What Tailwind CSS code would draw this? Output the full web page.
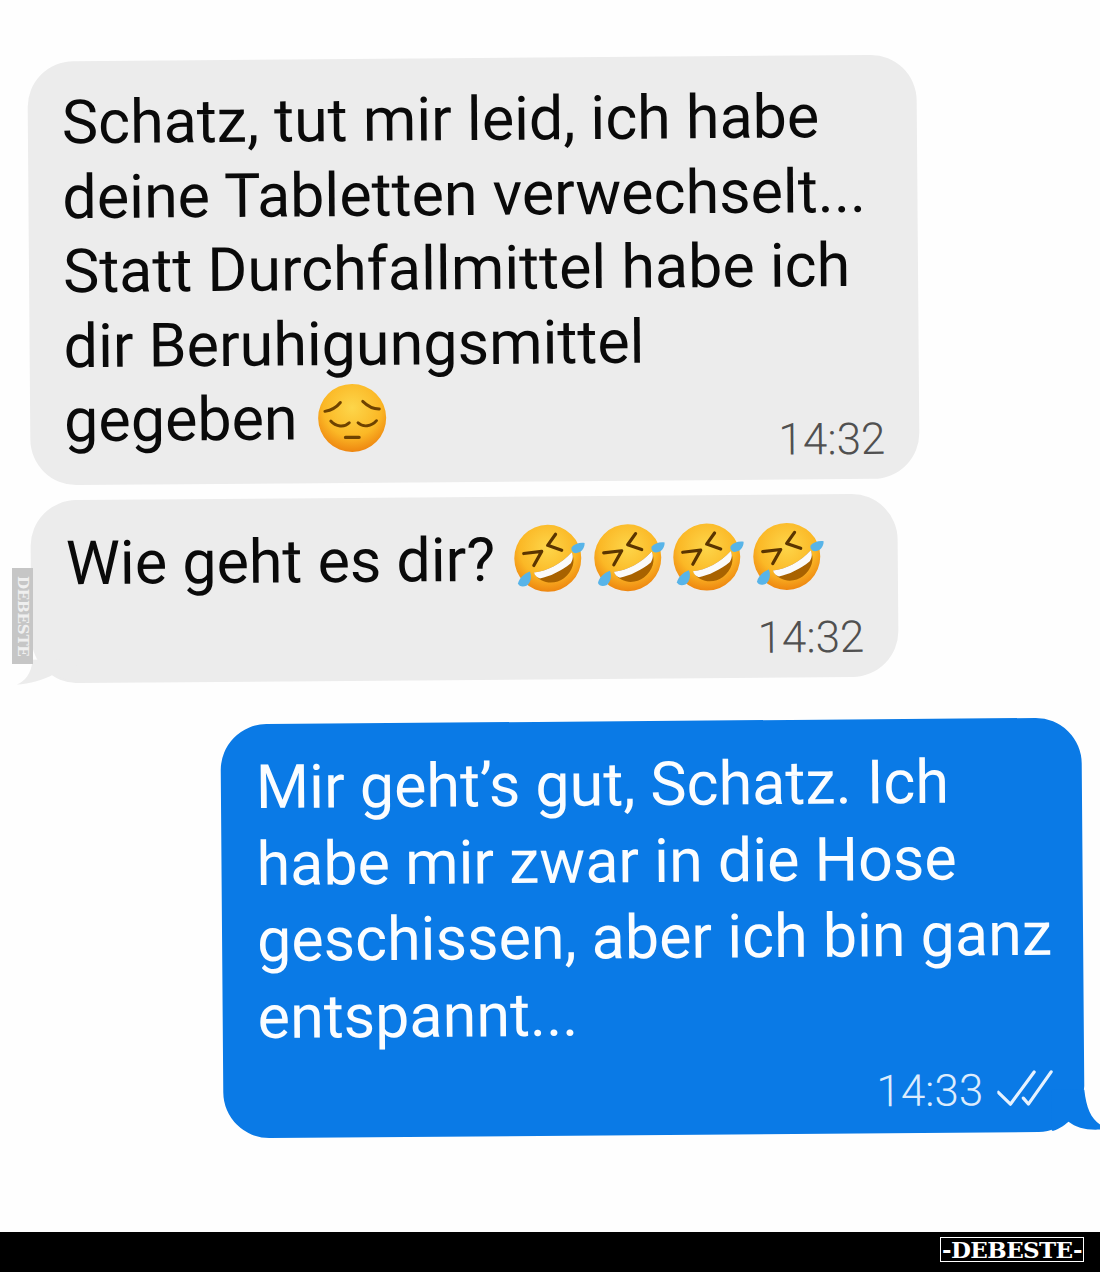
<!doctype html>
<html lang="de">
<head>
  <meta charset="UTF-8">
  <title>Chat</title>
  <script src="https://cdn.jsdelivr.net/npm/@tailwindcss/browser@4"></script>
</head>
<body class="bg-[#fefefe]">
  <svg class="absolute w-0 h-0">
    <defs>
      <radialGradient id="yellow" cx="50%" cy="35%" r="65%">
        <stop offset="0" stop-color="#fdd64a"/>
        <stop offset="0.65" stop-color="#fbb826"/>
        <stop offset="1" stop-color="#ee8610"/>
      </radialGradient>
      <symbol id="rofl" viewBox="0 0 72 72">
        <circle cx="34" cy="35" r="33.5" fill="url(#yellow)"/>
        <path d="M20 49 C33 48 48 40 58 29 C62 38 59 48 50 55 C42 61 27 62 20 49Z" fill="#a86200"/>
        <path d="M20 49 C33 48 48 40 58 29 C60 33 59 37 57 40 C47 48 36 53 26 55 C23 54 21 52 20 49Z" fill="#fafafa"/>
        <path d="M10 30 L28 28 L20 42" fill="none" stroke="#5b3500" stroke-width="3.2" stroke-linecap="round" stroke-linejoin="round"/>
        <path d="M42 11 L34 22 L48 27" fill="none" stroke="#5b3500" stroke-width="3.2" stroke-linecap="round" stroke-linejoin="round"/>
        <path d="M58 24 C61 21 66 19 71 20 C71 26 67 30 62 30 C59 30 57 27 58 24Z" fill="#58b4e8"/>
        <path d="M4 60 C5 55 10 50 16 48 C18 53 17 59 13 62 C9 64 5 63 4 60Z" fill="#58b4e8"/>
      </symbol>
    </defs>
  </svg>

  <div class="relative w-[1100px] h-[1272px] overflow-hidden flex flex-col font-['Roboto',sans-serif]">
    <main class="h-[1232px] flex flex-col pt-[58px]">

      <div class="relative ml-[29px] w-[889px] h-[424px] rounded-[46px] bg-[#ececec] rotate-[-0.45deg] pl-[34px] pt-[24px] text-[61px] leading-[74.5px] text-[#0a0a0a]">
        <p>Schatz, tut mir leid, ich habe</p>
        <p>deine Tabletten verwechselt...</p>
        <p>Statt Durchfallmittel habe ich</p>
        <p>dir Beruhigungsmittel</p>
        <p class="flex items-center gap-[19px]">gegeben
          <svg class="w-[70px] h-[70px]" viewBox="0 0 72 72">
            <circle cx="36" cy="36" r="35" fill="url(#yellow)"/>
            <path d="M8 29 C14 28 20 25 24 20" fill="none" stroke="#6e4200" stroke-width="3" stroke-linecap="round"/>
            <path d="M64 27 C58 27 52 24 47 19" fill="none" stroke="#6e4200" stroke-width="3" stroke-linecap="round"/>
            <path d="M14 39 C19 45 28 46 33 41" fill="none" stroke="#6e4200" stroke-width="3" stroke-linecap="round"/>
            <path d="M42 41 C47 46 56 45 61 39" fill="none" stroke="#6e4200" stroke-width="3" stroke-linecap="round"/>
            <path d="M29 56 H43" fill="none" stroke="#6e4200" stroke-width="3.4" stroke-linecap="round"/>
          </svg>
        </p>
        <span class="absolute right-[34px] bottom-[15px] text-[44px] leading-[50px] font-light text-[#505050]">14:32</span>
      </div>

      <div class="relative mt-[15px] ml-[31px] w-[867px] h-[183px] rounded-[46px] bg-[#ececec] rotate-[-0.45deg] pl-[35px] pt-[26px] text-[61px] leading-[75px] text-[#0a0a0a]">
        <p class="flex items-center">Wie geht es dir?
          <span class="flex ml-[19px] mt-[-1px] gap-[7.5px]">
            <svg class="w-[72px] h-[72px]"><use href="#rofl"/></svg>
            <svg class="w-[72px] h-[72px]"><use href="#rofl"/></svg>
            <svg class="w-[72px] h-[72px]"><use href="#rofl"/></svg>
            <svg class="w-[72px] h-[72px]"><use href="#rofl"/></svg>
          </span>
        </p>
        <span class="absolute right-[34px] bottom-[15px] text-[44px] leading-[50px] font-light text-[#505050]">14:32</span>
        <svg class="absolute left-[-15px] bottom-[-2px] w-[60px] h-[26px]" viewBox="0 0 60 26">
          <path d="M0 25 C8 22 15 14 16 0 L60 0 L60 24 C50 22 43 18 37 15 C28 20 12 25 0 25Z" fill="#ececec"/>
        </svg>
      </div>

      <div class="relative mt-[41px] ml-[222px] w-[861px] h-[414px] rounded-[46px] bg-[#0a7ae6] rotate-[-0.45deg] pl-[35px] pt-[25px] text-[61px] leading-[76.5px] text-[#fbfdff]">
        <p>Mir geht’s gut, Schatz. Ich</p>
        <p>habe mir zwar in die Hose</p>
        <p>geschissen, aber ich bin ganz</p>
        <p>entspannt...</p>
        <div class="absolute right-[31px] bottom-[17px] flex items-center gap-[14px] text-[44px] leading-[50px] font-light text-[#dcecfd]">
          <span>14:33</span>
          <svg class="w-[56px] h-[40px]" viewBox="0 0 56 40">
            <path d="M1 22 L13 34 L37 2 M26 28 L31 34 L54 2" fill="none" stroke="#e6f2ff" stroke-width="3.2" stroke-linecap="round" stroke-linejoin="round"/>
          </svg>
        </div>
        <svg class="absolute right-[-17px] bottom-[-3px] w-[50px] h-[45px]" viewBox="0 0 50 45">
          <path d="M33 0 C35 20 40 30 50 36 L50 40 C35 41 25 38 17 32 C12 36 5 41 0 41 L0 0Z" fill="#0a7ae6"/>
        </svg>
      </div>
    </main>

    <footer class="h-10 bg-black flex justify-end items-start pr-4 pt-[5px]">
      <div class="w-[144px] h-[25px] border border-white flex items-center justify-center font-['DejaVu_Serif',serif] font-bold text-[23px] leading-none tracking-[-0.6px] text-white">-DEBESTE-</div>
    </footer>

    <div class="absolute left-[12px] top-[568px] w-[21px] h-[96px] bg-[#c6c6c6] flex items-center justify-center">
      <span class="[writing-mode:vertical-rl] font-['DejaVu_Serif',serif] font-bold text-[15px] leading-none tracking-[-0.2px] text-[#efefef]">DEBESTE</span>
    </div>
  </div>
</body>
</html>
